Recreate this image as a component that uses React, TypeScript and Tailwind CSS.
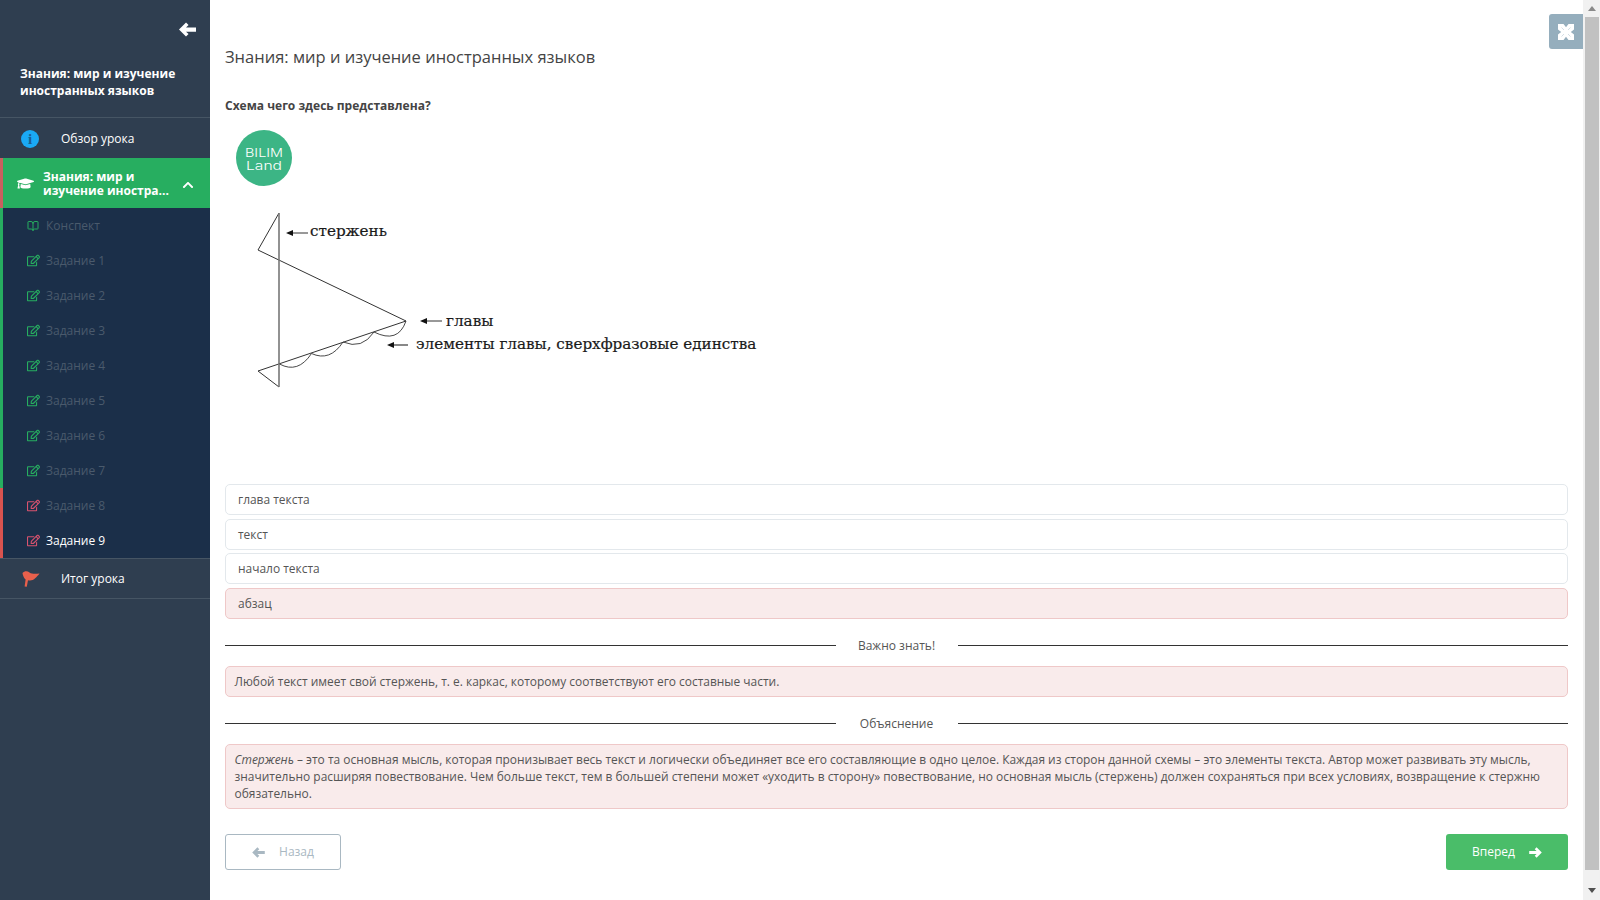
import { FaGraduationCap, FaChevronUp, FaRegEdit } from "react-icons/fa";
import { BookOpen } from "lucide-react";

const tasks = [
  { n: "Задание 1", c: "g" }, { n: "Задание 2", c: "g" }, { n: "Задание 3", c: "g" }, { n: "Задание 4", c: "g" },
  { n: "Задание 5", c: "g" }, { n: "Задание 6", c: "g" }, { n: "Задание 7", c: "g" }, { n: "Задание 8", c: "r" }, { n: "Задание 9", c: "r", active: true },
];

function ArrowLeft({ className }: { className: string }) {
  return (
    <svg viewBox="0 0 16 14" className={className} fill="currentColor">
      <path d="M0 7 L6.6 0.4 L9 2.8 L6.6 5 H16 V9 H6.6 L9 11.2 L6.6 13.6 Z" />
    </svg>
  );
}

function ArrowRight({ className }: { className: string }) {
  return (
    <svg viewBox="0 0 16 14" className={className} fill="currentColor">
      <path d="M16 7 L9.4 0.4 L7 2.8 L9.4 5 H0 V9 H9.4 L7 11.2 L9.4 13.6 Z" />
    </svg>
  );
}

function Sidebar() {
  return (
    <aside className="w-[210px] h-full shrink-0 bg-[#2f3e50] text-white flex flex-col">
      <div className="h-[118px] border-b border-[#465564] shrink-0 flex flex-col">
        <div className="flex justify-end pt-[22px] pr-[14px] h-[65px]"><ArrowLeft className="w-[17px] h-[15px]" /></div>
        <div className="px-[20px] text-[12px] leading-[17px] font-bold">Знания: мир и изучение иностранных языков</div>
      </div>
      <div className="h-[40px] flex items-center pl-[21px] pt-[2px] shrink-0">
        <span className="w-[18px] h-[18px] rounded-full bg-[#1aa9f5] text-[#1b5f92] flex items-center justify-center text-[15px] font-bold leading-none font-['Liberation_Serif',serif]">i</span>
        <span className="ml-[22px] text-[12px]">Обзор урока</span>
      </div>
      <div className="h-[50px] bg-[#27ae60] border-l-[3px] border-[#c9605f] flex items-center shrink-0">
        <FaGraduationCap className="w-[17px] h-[17px] ml-[14px] shrink-0" />
        <div className="ml-[9px] w-[129px] pt-[2px] text-[12px] leading-[14px] font-bold">
          Знания: мир и<br />изучение иностра...
        </div>
        <FaChevronUp className="w-[12px] h-[12px] ml-[10px] mt-[3px] shrink-0" />
      </div>
      <div className="h-[350px] bg-[#1b2f49] flex flex-col shrink-0 relative">
        <div className="h-[35px] flex items-center border-l-[3px] border-[#27ae60]">
          <BookOpen className="w-[12px] h-[12px] ml-[24px] text-[#27ae60]" strokeWidth={2} />
          <span className="ml-[7px] text-[12px] text-[#4a5a6c]">Конспект</span>
        </div>
        {tasks.map((t) => (
          <div key={t.n} className={t.c === "g" ? "h-[35px] flex items-center border-l-[3px] border-[#27ae60]" : "h-[35px] flex items-center border-l-[3px] border-[#d9534f]"}>
            <FaRegEdit className={t.c === "g" ? "w-[13px] h-[13px] ml-[24px] text-[#27ae60]" : "w-[13px] h-[13px] ml-[24px] text-[#d9536f]"} />
            <span className={t.active ? "ml-[6px] text-[12px] text-white" : "ml-[6px] text-[12px] text-[#4a5a6c]"}>{t.n}</span>
          </div>
        ))}
      </div>
      <div className="h-[41px] flex items-center pl-[22px] border-t border-b border-[#465564] shrink-0">
        <svg viewBox="0 0 18 16" className="w-[18px] h-[16px] text-[#e8604c]" fill="currentColor">
          <path d="M0.5 2 C2.5 -0.2 5.5 0 7.5 1.4 C10 3 13 3 17.5 2.4 C16 4.4 14.6 5.8 13.4 7 C11 9.6 8.2 9.6 6 9.2 L4.8 15.8 L2.6 15.4 L3.6 8.6 C1.8 6.8 0.8 4.4 0.5 2 Z" />
        </svg>
        <span className="ml-[21px] text-[12px]">Итог урока</span>
      </div>
    </aside>
  );
}

function Scheme() {
  return (
    <svg viewBox="225 125 540 352" className="w-[540px] h-[352px] block">
      <circle cx="264" cy="158" r="28" fill="#3cb585" />
      <text x="264" y="156.5" textAnchor="middle" fill="#fff" fontSize="12" fontFamily="Inter, sans-serif" fontWeight="300" textLength={38} lengthAdjust="spacingAndGlyphs">BILIM</text>
      <text x="264" y="170" textAnchor="middle" fill="#fff" fontSize="12" fontFamily="Inter, sans-serif" fontWeight="300" textLength={36} lengthAdjust="spacingAndGlyphs">Land</text>
      <path d="M279 213 L258 250 L406 321 L258 371 L279 387" fill="none" stroke="#333" strokeWidth="1" />
      <path d="M279 213 V387" stroke="#777" strokeWidth="1.6" />
      <path d="M279.5 364 Q298 374 311.5 353.5 Q330 362 343 342 Q362 350 374 332 Q398 344 406 321" fill="none" stroke="#333" strokeWidth="0.9" />
      <g stroke="#333" strokeWidth="1">
        <path d="M290 233 H308" />
        <path d="M424 321 H442" />
        <path d="M392 345 H408" stroke="#555" strokeWidth="1.4" />
      </g>
      <g fill="#111">
        <path d="M286 233 L293 230 V236 Z" />
        <path d="M420 321 L427 318 V324 Z" />
        <path d="M387 345 L394 342 V348 Z" />
      </g>
      <g fill="#1a1a1a" stroke="#1a1a1a" strokeWidth="0.2" fontFamily="'DejaVu Serif', serif" fontSize="15.2">
        <text x="310" y="236">стержень</text>
        <text x="446" y="326">главы</text>
        <text x="416" y="349">элементы главы, сверхфразовые единства</text>
      </g>
    </svg>
  );
}

function Divider({ text }: { text: string }) {
  return (
    <div className="flex items-center h-[21px] text-[12px] text-[#555]">
      <div className="flex-1 h-px bg-[#333]" />
      <div className="w-[122px] text-center pt-[1px]">{text}</div>
      <div className="flex-1 h-px bg-[#333]" />
    </div>
  );
}

function Scrollbar() {
  return (
    <div className="w-[17px] h-full shrink-0 bg-[#f1f1f1] flex flex-col items-center">
      <div className="h-[17px] flex items-center justify-center shrink-0">
        <div className="w-0 h-0 border-l-[4px] border-r-[4px] border-b-[5px] border-l-transparent border-r-transparent border-b-[#8a8a8a]" />
      </div>
      <div className="w-[14px] h-[853px] bg-[#c1c1c1] shrink-0" />
      <div className="h-[30px] flex items-center justify-center shrink-0 pt-[11px]">
        <div className="w-0 h-0 border-l-[4px] border-r-[4px] border-t-[5px] border-l-transparent border-r-transparent border-t-[#505050]" />
      </div>
    </div>
  );
}

export default function App() {
  const opts = ["глава текста", "текст", "начало текста"];
  return (
    <div className="w-[1600px] h-[900px] overflow-hidden flex bg-white text-[#555] font-['Open_Sans',sans-serif]">
      <Sidebar />
      <main className="flex-1 relative px-[15px]">
        <button className="absolute top-[14px] right-0 w-[34px] h-[35px] bg-[#95aebd] rounded-l-[3px] flex items-center justify-center">
          <svg viewBox="0 0 16 16" className="w-[16px] h-[16px]">
            <rect width="16" height="16" fill="#fff" />
            <path d="M5.5 0 H10.5 L8 3.2 Z M5.5 16 H10.5 L8 12.8 Z M0 5.5 V10.5 L3.2 8 Z M16 5.5 V10.5 L12.8 8 Z" fill="#95aebd" />
            <path d="M3.5 3.5 L6 6 M12.5 3.5 L10 6 M3.5 12.5 L6 10 M12.5 12.5 L10 10" stroke="#c9d6de" strokeWidth="0.8" />
          </svg>
        </button>
        <h1 className="pt-[45px] text-[16.5px] leading-[24px] font-normal text-[#444]">Знания: мир и изучение иностранных языков</h1>
        <p className="mt-[28px] text-[12px] leading-[18px] font-bold text-[#444]">Схема чего здесь представлена?</p>
        <div className="mt-[10px]"><Scheme /></div>
        <div className="mt-[7px] flex flex-col gap-[3.5px]">
          {opts.map((o) => (
            <div key={o} className="h-[31px] border border-[#e3e8ec] rounded-[5px] px-[12px] pt-[1px] flex items-center text-[11.95px] text-[#555]">{o}</div>
          ))}
          <div className="h-[31px] border border-[#efc8c8] bg-[#f9ebeb] rounded-[5px] px-[12px] pt-[1px] flex items-center text-[11.95px] text-[#555]">абзац</div>
        </div>
        <div className="mt-[16px]"><Divider text="Важно знать!" /></div>
        <div className="mt-[10px] h-[31px] border border-[#efc8c8] bg-[#f9ebeb] rounded-[5px] px-[8.5px] pt-[1px] flex items-center text-[11.95px] text-[#555]">
          Любой текст имеет свой стержень, т. е. каркас, которому соответствуют его составные части.
        </div>
        <div className="mt-[16px]"><Divider text="Объяснение" /></div>
        <div className="mt-[10px] border border-[#efc8c8] bg-[#f9ebeb] rounded-[5px] px-[8.5px] py-[6px] text-[11.95px] leading-[17px] text-[#555]">
          <em>Стержень</em> – это та основная мысль, которая пронизывает весь текст и логически объединяет все его составляющие в одно целое. Каждая из сторон данной схемы – это элементы текста. Автор может развивать эту мысль, значительно расширяя повествование. Чем больше текст, тем в большей степени может «уходить в сторону» повествование, но основная мысль (стержень) должен сохраняться при всех условиях, возвращение к стержню обязательно.
        </div>
        <div className="mt-[25px] flex justify-between">
          <button className="w-[116px] h-[36px] pt-[1px] border border-[#a9b8c2] rounded-[3px] flex items-center justify-center text-[12px] text-[#a9b8c2]">
            <ArrowLeft className="w-[13px] h-[11px] mr-[14px]" />Назад
          </button>
          <button className="w-[122px] h-[36px] pt-[1px] bg-[#4abd69] rounded-[3px] flex items-center justify-center text-[12px] text-white">
            Вперед<ArrowRight className="w-[13px] h-[11px] ml-[14px]" />
          </button>
        </div>
      </main>
      <Scrollbar />
    </div>
  );
}
